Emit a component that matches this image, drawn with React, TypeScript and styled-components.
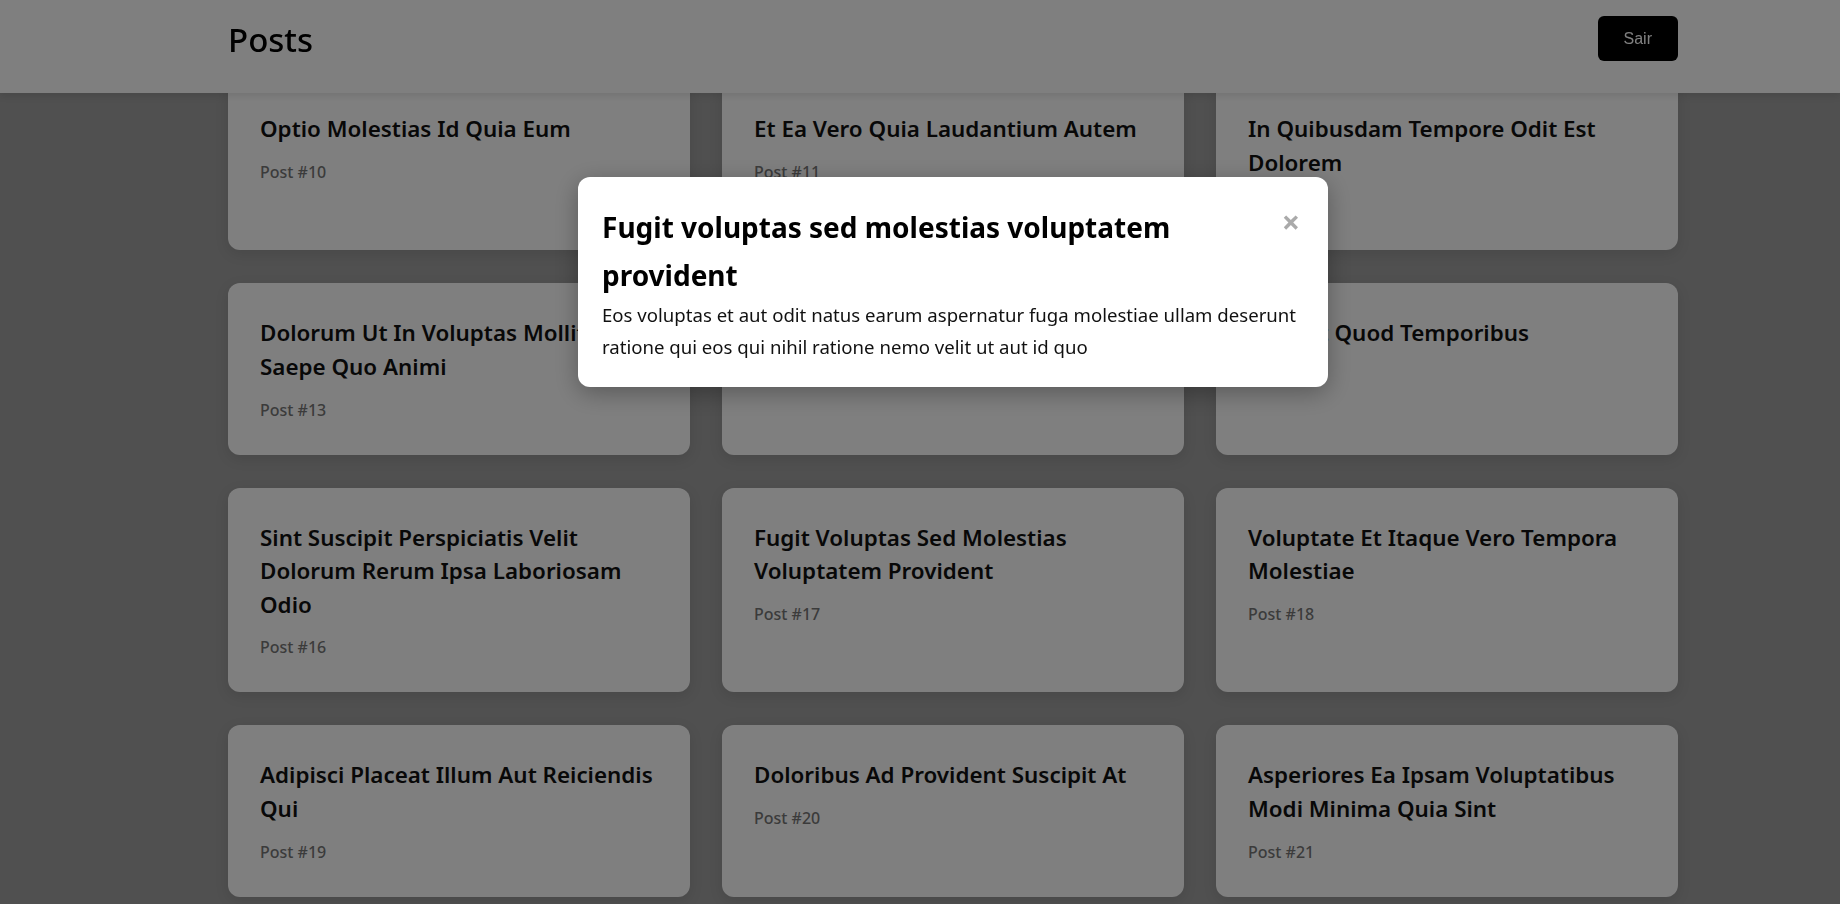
import React, { useLayoutEffect, useRef } from "react";
import styled, { createGlobalStyle } from "styled-components";

type Post = { id: number; title: string; body: string };

const TITLES = [
  "sunt aut facere repellat provident occaecati excepturi optio reprehenderit",
  "qui est esse",
  "ea molestias quasi exercitationem repellat qui ipsa sit aut",
  "eum et est occaecati",
  "nesciunt quas odio",
  "dolorem eum magni eos aperiam quia",
  "magnam facilis autem",
  "dolorem dolore est ipsam",
  "nesciunt iure omnis dolorem tempora et accusantium",
  "optio molestias id quia eum",
  "et ea vero quia laudantium autem",
  "in quibusdam tempore odit est dolorem",
  "dolorum ut in voluptas mollitia et saepe quo animi",
  "voluptatem eligendi optio",
  "eveniet quod temporibus",
  "sint suscipit perspiciatis velit dolorum rerum ipsa laboriosam odio",
  "fugit voluptas sed molestias voluptatem provident",
  "voluptate et itaque vero tempora molestiae",
  "adipisci placeat illum aut reiciendis qui",
  "doloribus ad provident suscipit at",
  "asperiores ea ipsam voluptatibus modi minima quia sint",
  "dolor sint quo a velit explicabo quia nam",
  "maxime id vitae nihil numquam",
  "autem hic labore sunt dolores incidunt",
];

const POSTS: Post[] = TITLES.map((title, i) => ({
  id: i + 1,
  title,
  body:
    i === 16
      ? "eos voluptas et aut odit natus earum\naspernatur fuga molestiae ullam\ndeserunt ratione qui eos\nqui nihil ratione nemo velit ut aut id quo"
      : "",
}));

const SELECTED = POSTS[16];
const ANCHOR_ID = 10;
const ANCHOR_TOP = 79;

const GlobalStyle = createGlobalStyle`
  *, *::before, *::after { box-sizing: border-box; }
  html, body { margin: 0; padding: 0; height: 100%; overflow: hidden; }
  body {
    font-family: "Noto Sans", "Open Sans", sans-serif;
    background: #a0a0a0;
    color: #111;
  }
`;

const Scroller = styled.div`
  height: 100vh;
  overflow-y: auto;
  scrollbar-width: none;
  &::-webkit-scrollbar { display: none; }
`;

const Header = styled.header`
  position: sticky;
  top: 0;
  z-index: 10;
  height: 93px;
  padding: 16px 0 0 66px;
  background: #ffffff;
  box-shadow: 0 2px 8px rgba(0, 0, 0, 0.12);
`;

const Bar = styled.div`
  width: 1450px;
  margin: 0 auto;
  display: flex;
  align-items: flex-start;
  justify-content: space-between;
`;

const PageTitle = styled.h1`
  margin: 0;
  font-size: 33px;
  line-height: 48px;
  font-weight: 500;
  color: #000;
`;

const LogoutButton = styled.button`
  height: 45px;
  padding: 0 26px;
  border: none;
  border-radius: 6px;
  background: #000;
  color: #fff;
  font-family: "Liberation Sans", Arial, sans-serif;
  font-size: 16px;
  cursor: pointer;
`;

const Main = styled.main`
  padding: 32px 0 48px 66px;
`;

const Grid = styled.div`
  width: 1450px;
  margin: 0 auto;
  display: grid;
  grid-template-columns: repeat(3, 1fr);
  gap: 33px 32px;
`;

const Card = styled.article`
  background: #fff;
  border-radius: 12px;
  padding: 33px 32px 33px;
  box-shadow: 0 4px 14px rgba(0, 0, 0, 0.1);
  cursor: pointer;
`;

const CardTitle = styled.h3`
  margin: 0;
  font-size: 22.4px;
  line-height: 33.6px;
  font-weight: 600;
  color: #111;
  text-transform: capitalize;
`;

const CardMeta = styled.p`
  margin: 14px 0 0;
  font-size: 16px;
  line-height: 24px;
  font-weight: 500;
  color: #777;
`;

const Overlay = styled.div`
  position: fixed;
  inset: 0;
  z-index: 50;
  background: rgba(0, 0, 0, 0.5);
  display: flex;
  justify-content: center;
  align-items: flex-start;
  padding: 177px 0 0 66px;
`;

const Modal = styled.div`
  width: 750px;
  background: #fff;
  border-radius: 12px;
  padding: 26px 24px 24px;
  box-shadow: 0 6px 24px rgba(0, 0, 0, 0.3);
`;

const ModalHead = styled.div`
  display: flex;
  align-items: flex-start;
  justify-content: space-between;
  gap: 24px;
`;

const ModalTitle = styled.h2`
  margin: 0;
  font-size: 28px;
  line-height: 48px;
  font-weight: 700;
  color: #000;
  &::first-letter { text-transform: uppercase; }
`;

const CloseButton = styled.button`
  flex: none;
  margin: 3px 4px 0 0;
  padding: 0;
  border: none;
  background: none;
  font-family: "Noto Sans", sans-serif;
  font-size: 32px;
  line-height: 32px;
  font-weight: 700;
  color: #aaa;
  cursor: pointer;
`;

const ModalBody = styled.p`
  margin: 0;
  font-size: 18.6px;
  line-height: 32px;
  color: #111;
  &::first-letter { text-transform: uppercase; }
`;

export default function App() {
  const scrollerRef = useRef<HTMLDivElement>(null);
  const anchorRef = useRef<HTMLElement>(null);

  useLayoutEffect(() => {
    const place = () => {
      const s = scrollerRef.current;
      const a = anchorRef.current;
      if (!s || !a) return;
      const offset = a.getBoundingClientRect().top - s.getBoundingClientRect().top;
      s.scrollTop += offset - ANCHOR_TOP;
    };
    place();
    if (document.fonts && document.fonts.ready) document.fonts.ready.then(place);
  }, []);

  return (
    <>
      <GlobalStyle />
      <Scroller ref={scrollerRef}>
        <Header>
          <Bar>
            <PageTitle>Posts</PageTitle>
            <LogoutButton>Sair</LogoutButton>
          </Bar>
        </Header>
        <Main>
          <Grid>
            {POSTS.map((p) => (
              <Card key={p.id} ref={p.id === ANCHOR_ID ? anchorRef : undefined}>
                <CardTitle>{p.title}</CardTitle>
                <CardMeta>Post #{p.id}</CardMeta>
              </Card>
            ))}
          </Grid>
        </Main>
      </Scroller>
      <Overlay>
        <Modal role="dialog" aria-modal="true">
          <ModalHead>
            <ModalTitle>{SELECTED.title}</ModalTitle>
            <CloseButton aria-label="Fechar">×</CloseButton>
          </ModalHead>
          <ModalBody>{SELECTED.body.replace(/\n/g, " ")}</ModalBody>
        </Modal>
      </Overlay>
    </>
  );
}
